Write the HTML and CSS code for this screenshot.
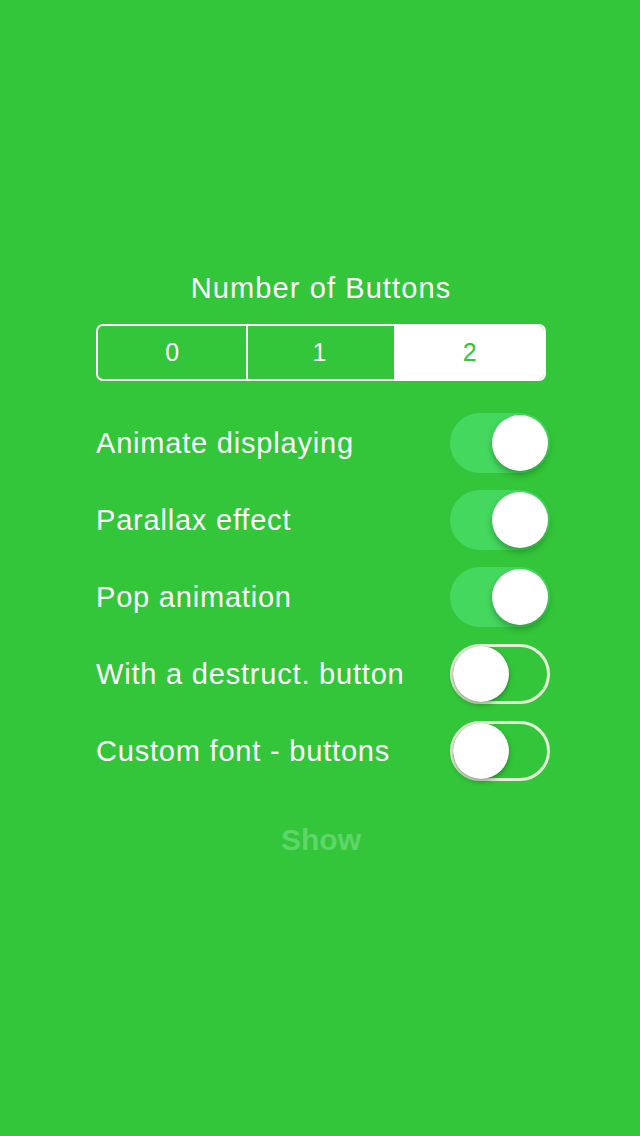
FILE: index.html
```html
<!DOCTYPE html>
<html>
<head>
<meta charset="utf-8">
<link rel="stylesheet" href="styles.css">
</head>
<body>
<div class="panel">
  <div class="title">Number of Buttons</div>
  <div class="segmented">
    <div class="seg">0</div>
    <div class="seg">1</div>
    <div class="seg selected">2</div>
  </div>
  <div class="rows">
    <div class="row"><span class="label">Animate displaying</span><span class="switch on"><span class="knob"></span></span></div>
    <div class="row"><span class="label">Parallax effect</span><span class="switch on"><span class="knob"></span></span></div>
    <div class="row"><span class="label">Pop animation</span><span class="switch on"><span class="knob"></span></span></div>
    <div class="row"><span class="label">With a destruct. button</span><span class="switch off"><span class="knob"></span></span></div>
    <div class="row"><span class="label">Custom font - buttons</span><span class="switch off"><span class="knob"></span></span></div>
  </div>
  <div class="show">Show</div>
</div>
</body>
</html>
```

FILE: styles.css
```css
html, body {
  margin: 0;
  padding: 0;
  background: #33c53a;
  height: 1136px;
  font-family: "Liberation Sans", Arial, sans-serif;
  color: #ffffff;
}
.panel {
  width: 454px;
  margin-left: 96px;
  padding-top: 270px;
  display: flex;
  flex-direction: column;
}
.title {
  width: 450px;
  text-align: center;
  font-size: 29px;
  letter-spacing: 1.1px;
  line-height: 36px;
}
.segmented {
  margin-top: 18px;
  width: 450px;
  height: 57px;
  box-sizing: border-box;
  border: 2px solid #ffffff;
  border-radius: 7px;
  display: flex;
  overflow: hidden;
}
.seg {
  flex: 1 1 0;
  display: flex;
  align-items: center;
  justify-content: center;
  font-size: 25px;
  border-right: 2px solid #ffffff;
}
.seg:first-child { flex-basis: 0; margin-right: -3px; padding-right: 0; }
.seg:last-child { border-right: none; }
.seg.selected {
  background: #ffffff;
  color: #33c53a;
}
.rows {
  margin-top: 32px;
  display: flex;
  flex-direction: column;
  gap: 17px;
}
.row {
  height: 60px;
  display: flex;
  align-items: center;
  justify-content: space-between;
}
.label {
  font-size: 29px;
  letter-spacing: 0.8px;
}
.switch {
  position: relative;
  width: 100px;
  height: 60px;
  box-sizing: border-box;
  border-radius: 30px;
}
.switch.on {
  background: #45d85f;
}
.switch.off {
  border: 3px solid #e8efd9;
}
.knob {
  position: absolute;
  top: 2px;
  width: 56px;
  height: 56px;
  border-radius: 50%;
  background: #ffffff;
  box-shadow: 0 4px 6px rgba(0, 60, 0, 0.35);
}
.switch.on .knob { right: 2px; }
.switch.off .knob { left: 0px; top: -1px; box-shadow: 0 3px 5px rgba(0,50,0,0.35), 0 0 1px rgba(0,0,0,0.3); }
.show {
  width: 450px;
  margin-top: 42px;
  text-align: center;
  font-size: 30px;
  font-weight: bold;
  color: #5fd66a;
}
```
